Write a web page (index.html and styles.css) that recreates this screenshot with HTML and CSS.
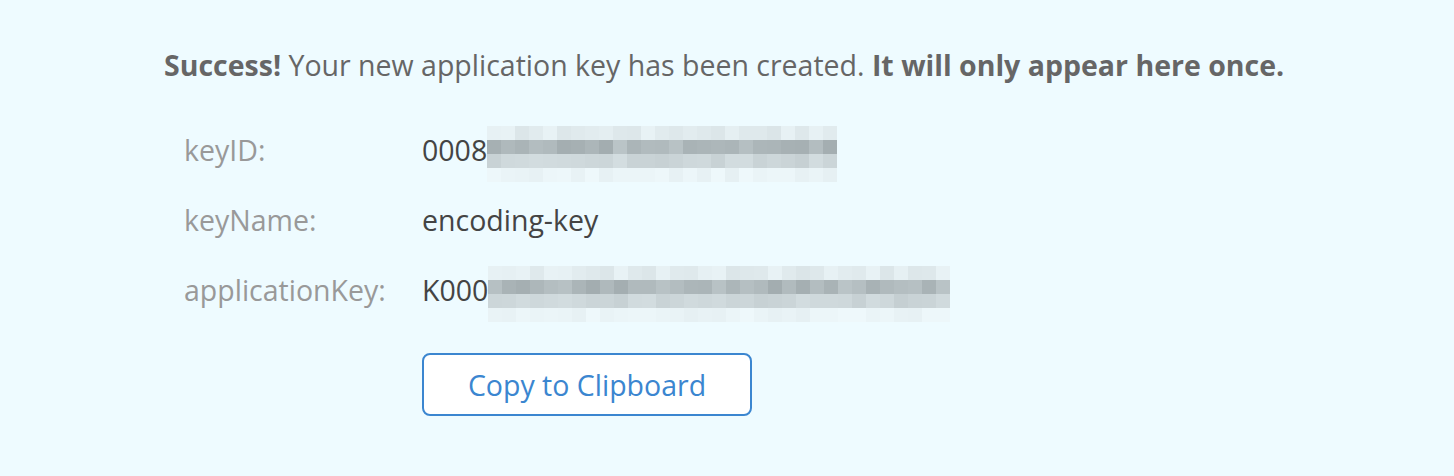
FILE: index.html
```html
<!DOCTYPE html>
<html lang="en">
<head>
    <meta charset="UTF-8">
    <title>Application Key Created</title>
    <link rel="stylesheet" href="styles.css">
</head>
<body>
    <div class="key-panel">
        <p class="notice"><strong>Success!</strong> Your new application key has been created. <strong>It will only appear here once.</strong></p>

        <div class="key-table">
            <div class="key-label">keyID:</div>
            <div class="key-value">0008<span class="mosaic" id="mosaic-id" data-cols="25"></span></div>

            <div class="key-label">keyName:</div>
            <div class="key-value">encoding-key</div>

            <div class="key-label">applicationKey:</div>
            <div class="key-value">K000<span class="mosaic" id="mosaic-app" data-cols="33"></span></div>

            <div></div>
            <div class="key-actions"><button class="copy-button">Copy to Clipboard</button></div>
        </div>
    </div>

    <script>
        // blurred-out key: a row of grey pixel blocks
        function fillMosaic(el, seed) {
            const cols = +el.dataset.cols;
            const bands = [
                { base: 234, spread: 14 },
                { base: 182, spread: 24 },
                { base: 212, spread: 14 },
                { base: 242, spread: 8 }
            ];
            let s = seed;
            function rnd() {
                s = (s * 9301 + 49297) % 233280;
                return s / 233280;
            }
            bands.forEach(band => {
                const row = document.createElement('span');
                row.className = 'mosaic-row';
                for (let i = 0; i < cols; i++) {
                    const v = Math.round(band.base + (rnd() - 0.5) * band.spread);
                    const cell = document.createElement('span');
                    cell.className = 'mosaic-cell';
                    cell.style.background = `rgb(${v - 8}, ${v + 2}, ${v + 5})`;
                    row.appendChild(cell);
                }
                el.appendChild(row);
            });
        }
        fillMosaic(document.getElementById('mosaic-id'), 17);
        fillMosaic(document.getElementById('mosaic-app'), 91);
    </script>
</body>
</html>
```

FILE: styles.css
```css
body {
    margin: 0;
    background-color: #eefbff;
    font-family: 'Open Sans', sans-serif;
    color: #666;
}
.key-panel {
    padding: 42px 0 0 164px;
}
.notice {
    margin: 0;
    font-size: 28.5px;
    line-height: 46px;
    color: #666;
}
.notice strong {
    font-weight: 700;
}
.key-table {
    display: grid;
    grid-template-columns: 238px auto;
    grid-template-rows: repeat(3, 70px) auto;
    align-items: center;
    margin: 27px 0 0 20px;
    font-size: 28.5px;
}
.key-label {
    color: #999;
}
.key-value {
    display: flex;
    align-items: center;
    color: #444;
}
.mosaic {
    display: flex;
    flex-direction: column;
    margin-top: 8px;
}
.mosaic-row {
    display: flex;
}
.mosaic-cell {
    width: 14px;
    height: 14px;
}
.key-actions {
    align-self: start;
    padding-top: 28px;
}
.copy-button {
    display: block;
    width: 330px;
    height: 63px;
    background-color: #fff;
    border: 2px solid #3b86d0;
    border-radius: 8px;
    color: #3b86d0;
    font-family: 'Open Sans', sans-serif;
    font-size: 28.5px;
    cursor: pointer;
}
```
